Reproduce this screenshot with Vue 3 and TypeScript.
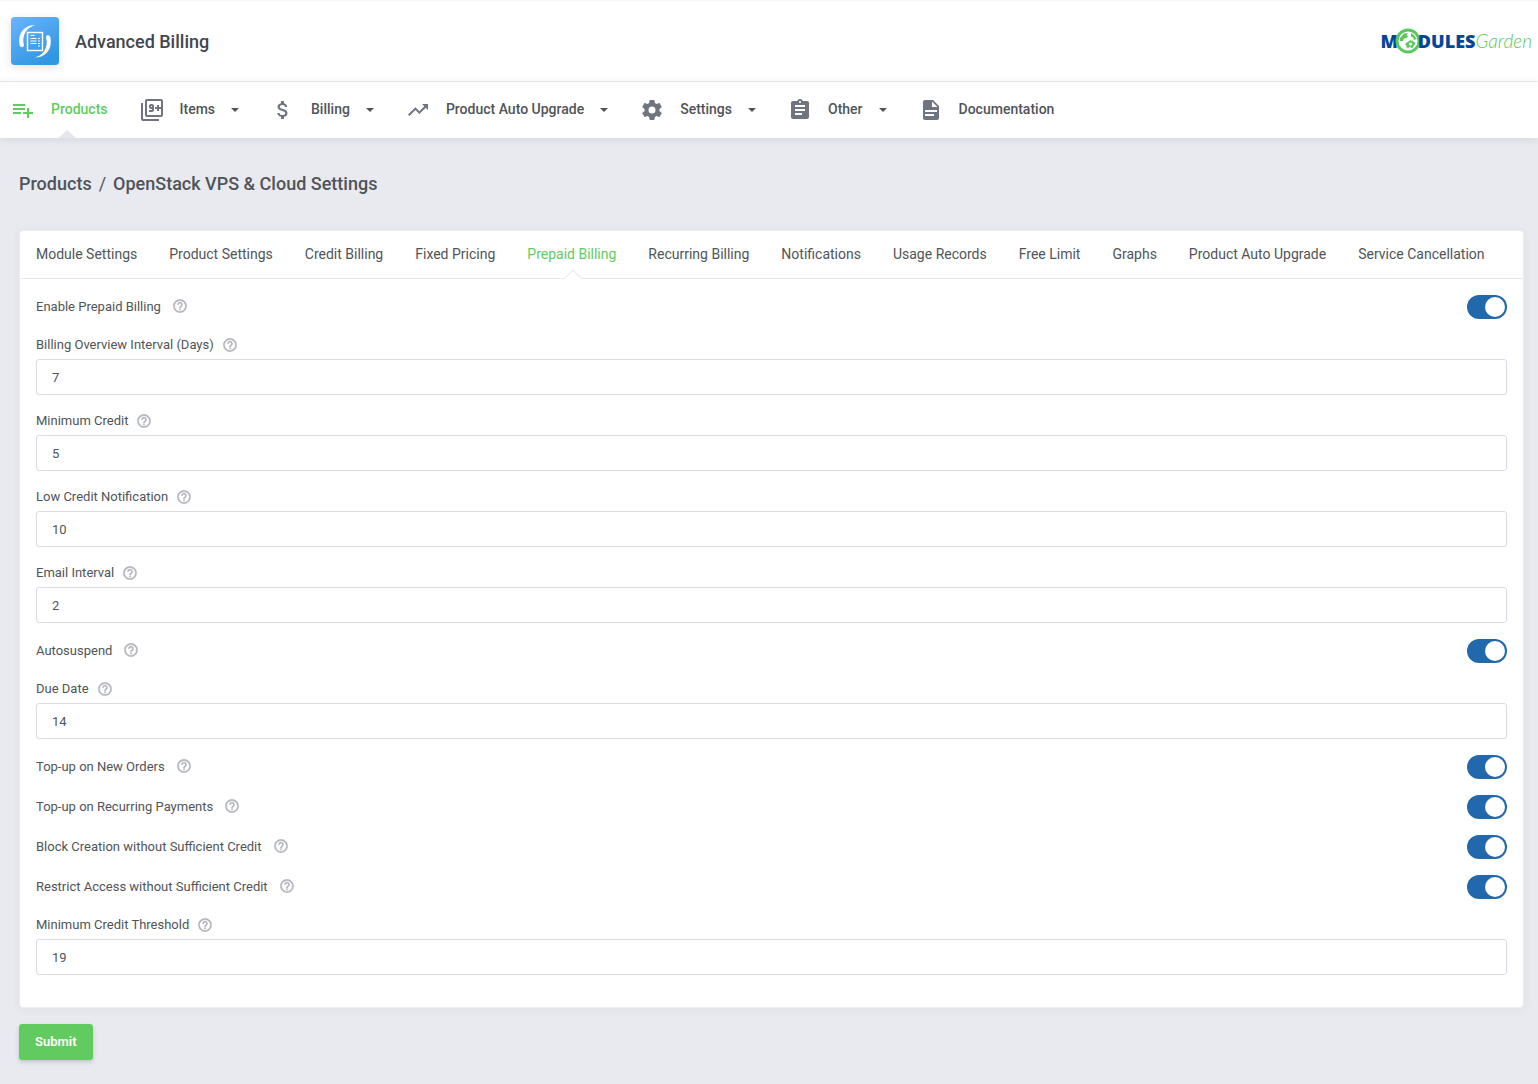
<script setup lang="ts">
import { reactive } from 'vue'

interface NavItem {
  label: string
  icon: string
  menu?: boolean
  active?: boolean
}

interface Field {
  id: string
  label: string
  kind: 'toggle' | 'text'
}

const navItems: NavItem[] = [
  { label: 'Products', active: true, icon: 'M2 16h8v-2H2v2zm16-2v-4h-2v4h-4v2h4v4h2v-4h4v-2h-4zm-4-8H2v2h12V6zm0 4H2v2h12v-2z' },
  { label: 'Items', menu: true, icon: 'M3 5H1v16c0 1.1.9 2 2 2h16v-2H3V5zm11 7V8c0-1.11-.9-2-2-2h-1c-1.1 0-2 .89-2 2v1c0 1.11.9 2 2 2h1v1H9v2h3c1.1 0 2-.89 2-2zm-3-3V8h1v1h-1zm10-8H7c-1.1 0-2 .9-2 2v14c0 1.1.9 2 2 2h14c1.1 0 2-.9 2-2V3c0-1.1-.9-2-2-2zm0 8h-2V7h-2v2h-2v2h2v2h2v-2h2v6H7V3h14v6z' },
  { label: 'Billing', menu: true, icon: 'M11.8 10.9c-2.27-.59-3-1.2-3-2.15 0-1.09 1.01-1.85 2.7-1.85 1.78 0 2.44.85 2.5 2.1h2.21c-.07-1.72-1.12-3.3-3.21-3.81V3h-3v2.16c-1.94.42-3.5 1.68-3.5 3.61 0 2.31 1.91 3.46 4.7 4.13 2.5.6 3 1.48 3 2.41 0 .69-.49 1.79-2.7 1.79-2.06 0-2.87-.92-2.98-2.1h-2.2c.12 2.19 1.76 3.42 3.68 3.83V21h3v-2.15c1.95-.37 3.5-1.5 3.5-3.55 0-2.84-2.43-3.81-4.7-4.4z' },
  { label: 'Product Auto Upgrade', menu: true, icon: 'M16 6l2.29 2.29-4.88 4.88-4-4L2 16.59 3.41 18l6-6 4 4 6.3-6.29L22 12V6z' },
  { label: 'Settings', menu: true, icon: 'M12 15.5A3.5 3.5 0 0 1 8.500 12 3.500 3.500 0 0 1 12 8.500a3.500 3.500 0 0 1 3.500 3.500 3.500 3.500 0 0 1-3.500 3.500m7.430-2.530c.04-.32.07-.64.07-.97s-.03-.66-.07-1l2.110-1.630c.19-.15.24-.42.12-.64l-2-3.460c-.12-.22-.39-.31-.61-.22l-2.490 1c-.52-.39-1.060-.73-1.690-.98l-.37-2.650A.506.506 0 0 0 14 2h-4c-.25 0-.46.18-.5.42l-.37 2.650c-.63.25-1.170.59-1.690.98l-2.490-1c-.22-.09-.49 0-.61.22l-2 3.460c-.13.22-.07.49.12.64L4.570 11c-.04.34-.07.67-.07 1s.03.65.07.97l-2.110 1.660c-.19.15-.25.42-.12.64l2 3.460c.12.22.39.3.61.22l2.490-1.010c.52.4 1.060.74 1.690.99l.37 2.650c.04.24.25.42.5.42h4c.25 0 .46-.18.5-.42l.37-2.650c.63-.26 1.170-.59 1.690-.99l2.490 1.010c.22.08.49 0 .61-.22l2-3.460c.12-.22.07-.49-.12-.64l-2.110-1.660z' },
  { label: 'Other', menu: true, icon: 'M19 3h-4.180C14.400 1.840 13.300 1 12 1s-2.400.84-2.820 2H5c-1.100 0-2 .9-2 2v14c0 1.100.9 2 2 2h14c1.100 0 2-.9 2-2V5c0-1.100-.9-2-2-2zm-7 0c.55 0 1 .45 1 1s-.45 1-1 1-1-.45-1-1 .45-1 1-1zm2 14H7v-2h7v2zm3-4H7v-2h10v2zm0-4H7V7h10v2z' },
  { label: 'Documentation', icon: 'M14 2H6c-1.100 0-2 .9-2 2v16c0 1.100.89 2 2 2h12c1.100 0 2-.9 2-2V8l-6-6zm1 16H6v-2h9v2zm3-4H6v-2h12v2zm-5-5V3.500L18.500 9H13z' },
]

const tabs: string[] = [
  'Module Settings', 'Product Settings', 'Credit Billing', 'Fixed Pricing', 'Prepaid Billing',
  'Recurring Billing', 'Notifications', 'Usage Records', 'Free Limit', 'Graphs',
  'Product Auto Upgrade', 'Service Cancellation',
]
const activeTab = 'Prepaid Billing'

const fields: Field[] = [
  { id: 'enable', label: 'Enable Prepaid Billing', kind: 'toggle' },
  { id: 'overview', label: 'Billing Overview Interval (Days)', kind: 'text' },
  { id: 'minimum', label: 'Minimum Credit', kind: 'text' },
  { id: 'low', label: 'Low Credit Notification', kind: 'text' },
  { id: 'email', label: 'Email Interval', kind: 'text' },
  { id: 'autosuspend', label: 'Autosuspend', kind: 'toggle' },
  { id: 'due', label: 'Due Date', kind: 'text' },
  { id: 'orders', label: 'Top-up on New Orders', kind: 'toggle' },
  { id: 'recurring', label: 'Top-up on Recurring Payments', kind: 'toggle' },
  { id: 'block', label: 'Block Creation without Sufficient Credit', kind: 'toggle' },
  { id: 'restrict', label: 'Restrict Access without Sufficient Credit', kind: 'toggle' },
  { id: 'threshold', label: 'Minimum Credit Threshold', kind: 'text' },
]

const texts = reactive<Record<string, string>>({
  overview: '7', minimum: '5', low: '10', email: '2', due: '14', threshold: '19',
})
const toggles = reactive<Record<string, boolean>>({
  enable: true, autosuspend: true, orders: true, recurring: true, block: true, restrict: true,
})
</script>

<template>
  <div class="page">
    <header class="topbar">
      <a class="app" href="#">
        <svg class="app-icon" viewBox="0 0 48 48" aria-hidden="true">
          <defs>
            <linearGradient id="app-fill" x1="0" y1="0" x2="0.600" y2="1">
              <stop offset="0" stop-color="#6cb4fd" />
              <stop offset="1" stop-color="#3097e1" />
            </linearGradient>
          </defs>
          <rect width="48" height="48" rx="3" fill="url(#app-fill)" />
          <path fill="#fff" d="M24 8C15 8 8.300 14 8.200 23.500c0 2.500.3 4.500.9 5.700.8 1.500 3.700 1.200 3.900-.7.100-1.500-1-2.500-.7-6C12.800 15.500 17 10 24 8z" />
          <path fill="#fff" d="M24 40.500C33 40.500 39.700 34.500 39.800 25c0-2.500-.3-4.500-.9-5.700-.8-1.500-3.700-1.200-3.900.7-.1 1.500 1 2.500.7 6C35.200 33 31 38.500 24 40.500z" />
          <rect x="16.500" y="15.500" width="15" height="18" fill="none" stroke="#fff" stroke-width="1.400" />
          <path stroke="#fff" stroke-width="1" d="M19.500 18.500h4M19.500 21.500h6M19.500 24h6M19.500 26.500h6M27 21.500h2M27 24h2M27 26.500h2M27 29h2" />
        </svg>
        <span class="app-name">Advanced Billing</span>
      </a>
      <a class="brand" href="#" aria-label="ModulesGarden">
        <span class="brand-bold">M</span>
        <svg class="brand-globe" viewBox="0 0 26 26" aria-hidden="true">
          <circle cx="13" cy="13" r="11" fill="#fff" stroke="#5bc85b" stroke-width="3" />
          <path fill="#5bc85b" d="M5 10l4-4.500 4-.5-1.500 2 1.500 1-1 2-3 .5-1 2.500-3 0zM16 5l3 2 2.500 4-2.500 1-1-2.500-2-1zM14 13l1.500-1 1 1 1.500-.5.500 1.500 2 .5-.5 2-1.500 1-.5 2-2 .5-1-1.500-1.500 1.500-2-.5v-2l-1.500-1 1-1.500z" />
          <circle cx="15.500" cy="16" r="1.500" fill="#fff" />
        </svg>
        <span class="brand-bold">DULES</span>
        <span class="brand-thin">Garden</span>
      </a>
    </header>

    <nav class="mainnav" aria-label="Main">
      <a v-for="item in navItems" :key="item.label" href="#" class="nav-item" :class="{ active: item.active }">
        <svg class="nav-icon" viewBox="0 0 24 24" aria-hidden="true"><path :d="item.icon" /></svg>
        <span>{{ item.label }}</span>
        <i v-if="item.menu" class="caret"></i>
      </a>
    </nav>

    <main class="content">
      <h1 class="crumbs">
        <a href="#">Products</a><span class="slash">/</span><span>OpenStack VPS &amp; Cloud Settings</span>
      </h1>

      <form @submit.prevent>
        <section class="card">
          <nav class="tabs" aria-label="Product settings">
            <a v-for="tab in tabs" :key="tab" href="#" class="tab" :class="{ active: tab === activeTab }">{{ tab }}</a>
          </nav>
          <div class="fields">
            <div v-for="field in fields" :key="field.id" :class="field.kind === 'toggle' ? 'row' : 'field'">
              <div class="caption">
                <label :for="field.id">{{ field.label }}</label>
                <svg class="help" viewBox="0 0 24 24" aria-hidden="true">
                  <path d="M11 18h2v-2h-2v2zm1-16C6.480 2 2 6.480 2 12s4.480 10 10 10 10-4.480 10-10S17.520 2 12 2zm0 18c-4.410 0-8-3.590-8-8s3.590-8 8-8 8 3.590 8 8-3.590 8-8 8zm0-14c-2.210 0-4 1.790-4 4h2c0-1.100.9-2 2-2s2 .9 2 2c0 2-3 1.750-3 5h2c0-2.250 3-2.500 3-5 0-2.210-1.790-4-4-4z" />
                </svg>
              </div>
              <input v-if="field.kind === 'toggle'" :id="field.id" v-model="toggles[field.id]" class="toggle" type="checkbox" />
              <input v-else :id="field.id" v-model="texts[field.id]" class="textbox" type="text" />
            </div>
          </div>
        </section>
        <button class="submit" type="submit">Submit</button>
      </form>
    </main>
  </div>
</template>

<style>
body {
  background: #e9eaef;
}
</style>

<style scoped>
.page {
  font-family: Roboto, 'Liberation Sans', sans-serif;
  font-size: 13px;
  color: #505459;
}

.page * {
  box-sizing: border-box;
}

a {
  color: inherit;
  text-decoration: none;
}

.topbar {
  display: flex;
  align-items: center;
  justify-content: space-between;
  height: 82px;
  padding: 0 6px 0 11px;
  background: #fff;
  border-top: 1px solid #f8f8f9;
  border-bottom: 1px solid #ededf0;
}

.app {
  display: flex;
  align-items: center;
  gap: 16px;
}

.app-icon {
  width: 48px;
  height: 48px;
  border-radius: 3px;
  box-shadow: 0 2px 8px rgba(0, 0, 0, 0.12);
}

.app-name {
  font-size: 18px;
  font-weight: 500;
  line-height: 24px;
  padding-top: 2px;
  color: #43474d;
}

.brand {
  display: flex;
  align-items: center;
  line-height: 26px;
}

.brand-bold {
  font-family: 'Open Sans', sans-serif;
  font-size: 18px;
  font-weight: 800;
  color: #04479a;
}

.brand-globe {
  width: 26px;
  height: 26px;
  margin: 0 -3px;
}

.brand-thin {
  font-family: Lato, sans-serif;
  font-size: 19px;
  font-style: italic;
  font-weight: 300;
  color: #5bc85b;
}

.mainnav {
  position: relative;
  display: flex;
  gap: 32px;
  height: 56px;
  padding: 0 11px;
  background: #fff;
  box-shadow: 0 1px 8px rgba(60, 65, 90, 0.12);
}

.nav-item {
  position: relative;
  display: flex;
  align-items: center;
  gap: 16px;
  font-size: 14px;
  font-weight: 500;
  line-height: 20px;
  padding-bottom: 2px;
  white-space: nowrap;
}

.nav-icon {
  width: 24px;
  height: 24px;
  margin-top: 2px;
  fill: #6f7480;
}

.nav-item.active {
  color: #62cb5f;
}

.nav-item.active .nav-icon {
  fill: #62cb5f;
}

.nav-item.active::after {
  content: '';
  position: absolute;
  bottom: 0;
  left: calc(50% - 1px);
  width: 18px;
  height: 8px;
  background: #e6e7ec;
  clip-path: polygon(50% 0, 100% 100%, 0 100%);
}

.caret {
  border: 4px solid transparent;
  border-top-color: #505459;
  border-bottom: 0;
  margin-top: 2px;
}

.content {
  padding: 34px 14px 24px 19px;
}

.crumbs {
  display: flex;
  gap: 7px;
  margin: 0 0 34px;
  font-size: 18px;
  font-weight: 500;
  line-height: 24px;
}

.slash {
  font-weight: 400;
}

.card {
  background: #fff;
  border: 1px solid #ededf1;
  border-radius: 4px;
  box-shadow: 0 2px 8px rgba(60, 65, 90, 0.06);
}

.tabs {
  display: flex;
  height: 48px;
  border-bottom: 1px solid #e7e8ee;
}

.tab {
  position: relative;
  padding: 13px 16px;
  font-size: 14px;
  line-height: 20px;
  white-space: nowrap;
}

.tab.active {
  color: #62cb5f;
}

.tab.active::after {
  content: '';
  position: absolute;
  bottom: -6px;
  left: calc(50% - 5px);
  width: 10px;
  height: 10px;
  background: #fff;
  border: 1px solid #e7e8ee;
  border-right-color: transparent;
  border-bottom-color: transparent;
  transform: rotate(45deg);
}

.fields {
  display: flex;
  flex-direction: column;
  gap: 16px;
  padding: 16px 16px 32px;
}

.row {
  display: flex;
  align-items: center;
  justify-content: space-between;
  height: 24px;
}

.caption {
  display: flex;
  align-items: center;
  gap: 8px;
  line-height: 20px;
}

.row .caption {
  gap: 11px;
}

.row .help {
  margin-bottom: 2px;
}

.help {
  width: 16px;
  height: 16px;
  fill: #b0b2b8;
  stroke: #b0b2b8;
  stroke-width: 0.5;
}

.field {
  display: flex;
  flex-direction: column;
  gap: 4px;
}

.textbox {
  width: 100%;
  height: 36px;
  padding: 0 15px;
  background: #fff;
  border: 1px solid #d9dae5;
  border-radius: 3px;
  font: inherit;
  color: inherit;
}

.toggle {
  flex: none;
  width: 40px;
  height: 24px;
  margin: 0;
  padding: 2px;
  appearance: none;
  background: #c4c7d0;
  border-radius: 12px;
}

.toggle::before {
  content: '';
  display: block;
  width: 20px;
  height: 20px;
  background: #fff;
  border-radius: 50%;
}

.toggle:checked {
  background: #2268ad;
}

.toggle:checked::before {
  margin-left: auto;
}

.submit {
  height: 36px;
  margin-top: 16px;
  padding: 0 16px 2px;
  background: #62cb5f;
  border: 0;
  border-radius: 3px;
  box-shadow: 0 2px 4px rgba(0, 0, 0, 0.16);
  font: inherit;
  font-weight: 600;
  color: #fff;
}
</style>
